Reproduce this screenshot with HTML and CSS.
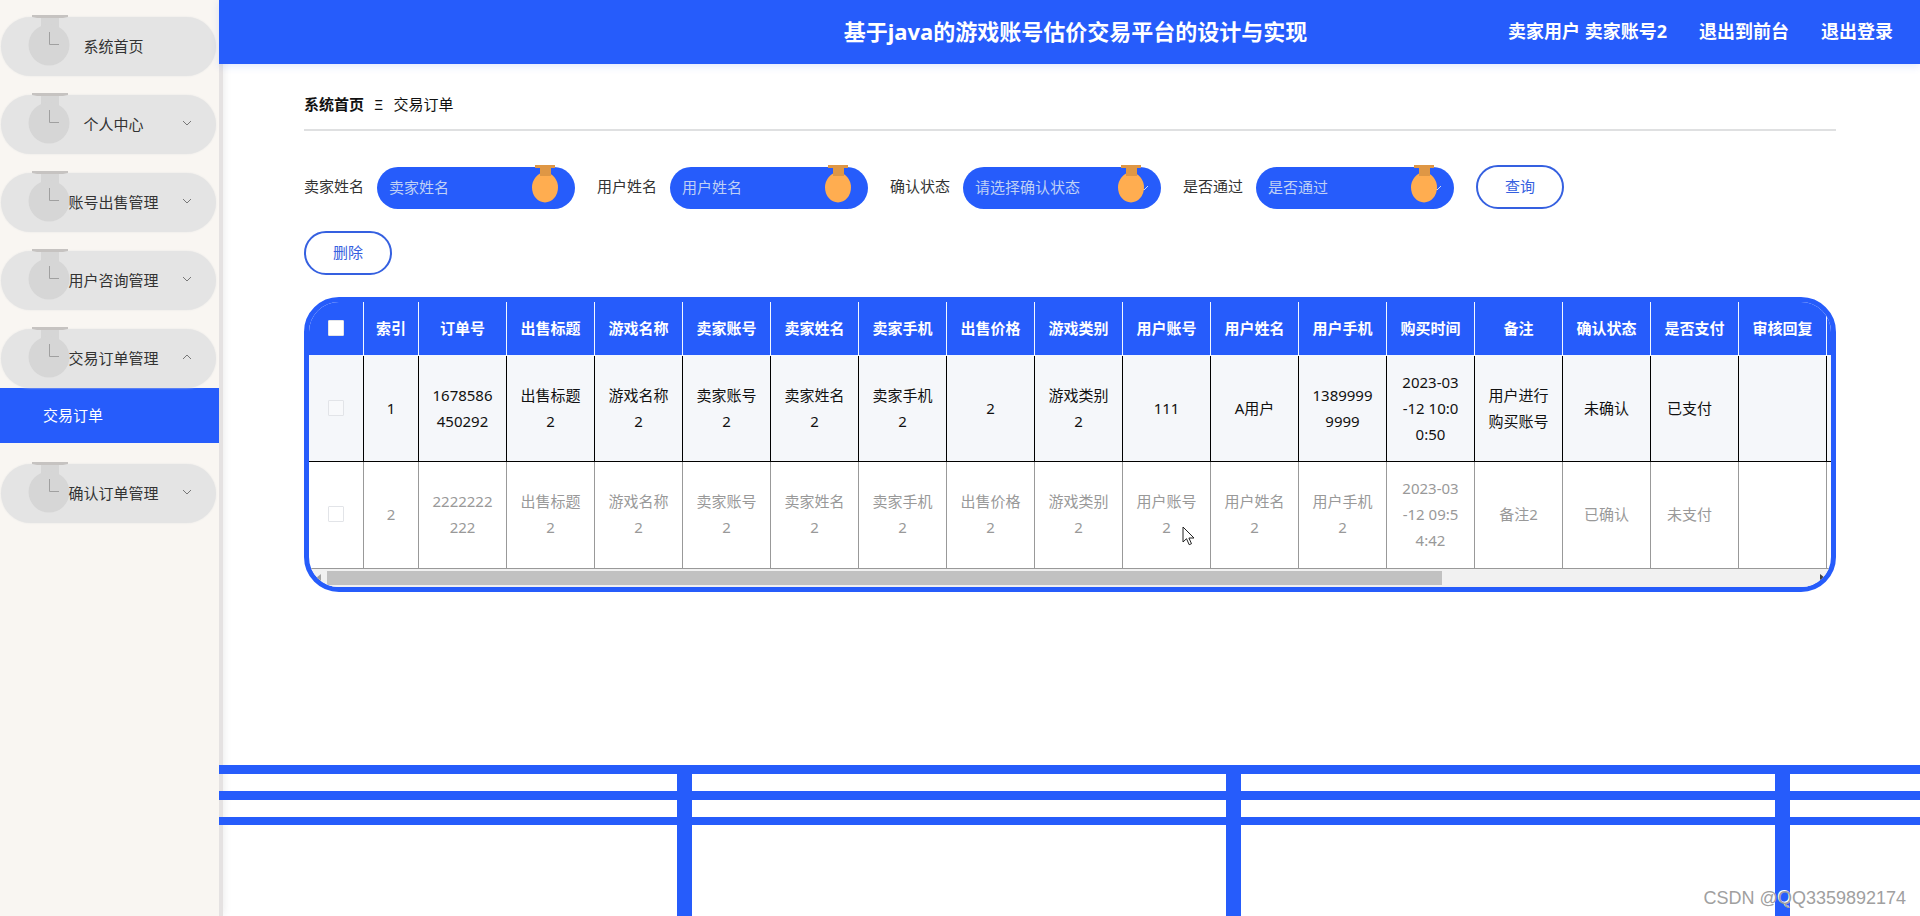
FILE: index.html
```html
<!DOCTYPE html>
<html lang="zh-CN">
<head>
<meta charset="utf-8">
<title>基于java的游戏账号估价交易平台的设计与实现</title>
<link rel="stylesheet" href="styles.css">
</head>
<body>
<svg class="defs" aria-hidden="true">
  <symbol id="clock-medal" viewBox="0 0 44 54">
    <rect x="14" y="3" width="18" height="20" fill="#d6d6d6"/>
    <circle cx="22" cy="31" r="20.500" fill="#d6d6d6"/>
    <path d="M5 1h36v2l-5 1H10L5 3z" fill="#c6c3c1"/>
    <path d="M22.500 18v12.500H32" fill="none" stroke="#a0a0a0"/>
  </symbol>
  <symbol id="medal" viewBox="0 0 26 38">
    <ellipse cx="13" cy="22.500" rx="13" ry="15" fill="#ffad50"/>
    <path d="M3 0h20v3h-4v8H8V3H3z" fill="#df9745"/>
  </symbol>
  <symbol id="chevron" viewBox="0 0 10 6">
    <path d="M1 1l4 4 4-4" fill="none" stroke="currentColor"/>
  </symbol>
</svg>
<div class="app">
  <nav class="sidebar">
    <a class="item" href="#"><svg class="item-icon"><use href="#clock-medal"/></svg><span class="item-text">系统首页</span></a>
    <a class="item" href="#"><svg class="item-icon"><use href="#clock-medal"/></svg><span class="item-text">个人中心</span><svg class="arrow"><use href="#chevron"/></svg></a>
    <a class="item" href="#"><svg class="item-icon"><use href="#clock-medal"/></svg><span class="item-text">账号出售管理</span><svg class="arrow"><use href="#chevron"/></svg></a>
    <a class="item" href="#"><svg class="item-icon"><use href="#clock-medal"/></svg><span class="item-text">用户咨询管理</span><svg class="arrow"><use href="#chevron"/></svg></a>
    <a class="item item-open" href="#"><svg class="item-icon"><use href="#clock-medal"/></svg><span class="item-text">交易订单管理</span><svg class="arrow arrow-up"><use href="#chevron"/></svg></a>
    <a class="subitem" href="#">交易订单</a>
    <a class="item" href="#"><svg class="item-icon"><use href="#clock-medal"/></svg><span class="item-text">确认订单管理</span><svg class="arrow"><use href="#chevron"/></svg></a>
  </nav>
  <div class="page">
    <header class="topbar">
      <h1 class="title">基于java的游戏账号估价交易平台的设计与实现</h1>
      <div class="user-links">
        <span>卖家用户 卖家账号2</span>
        <a href="#">退出到前台</a>
        <a href="#">退出登录</a>
      </div>
    </header>
    <main class="content">
      <div class="breadcrumb"><b>系统首页</b><span>Ξ</span><span>交易订单</span></div>
      <form class="filters">
        <div class="field">
          <label for="seller">卖家姓名</label>
          <div class="control"><input id="seller" type="text" placeholder="卖家姓名"><svg class="medal"><use href="#medal"/></svg></div>
        </div>
        <div class="field">
          <label for="user">用户姓名</label>
          <div class="control"><input id="user" type="text" placeholder="用户姓名"><svg class="medal"><use href="#medal"/></svg></div>
        </div>
        <div class="field">
          <label for="status">确认状态</label>
          <div class="control"><select id="status"><option>请选择确认状态</option></select><svg class="select-arrow"><use href="#chevron"/></svg><svg class="medal"><use href="#medal"/></svg></div>
        </div>
        <div class="field">
          <label for="passed">是否通过</label>
          <div class="control"><select id="passed"><option>是否通过</option></select><svg class="select-arrow"><use href="#chevron"/></svg><svg class="medal"><use href="#medal"/></svg></div>
        </div>
        <button class="btn" type="button">查询</button>
      </form>
      <div class="actions"><button class="btn" type="button">删除</button></div>
      <section class="table-box">
        <table class="orders">
          <colgroup><col class="col-narrow" span="2"><col class="col-data" span="16"><col class="col-ops"></colgroup>
          <thead>
            <tr>
              <th><input class="check" type="checkbox" aria-label="全选"></th>
              <th>索引</th><th>订单号</th><th>出售标题</th><th>游戏名称</th><th>卖家账号</th><th>卖家姓名</th><th>卖家手机</th><th>出售价格</th><th>游戏类别</th><th>用户账号</th><th>用户姓名</th><th>用户手机</th><th>购买时间</th><th>备注</th><th>确认状态</th><th>是否支付</th><th>审核回复</th><th></th>
            </tr>
          </thead>
          <tbody>
            <tr class="row-hover">
              <td><input class="check" type="checkbox" aria-label="1"></td>
              <td>1</td><td>1678586<br>450292</td><td>出售标题2</td><td>游戏名称2</td><td>卖家账号2</td><td>卖家姓名2</td><td>卖家手机2</td><td>2</td><td>游戏类别2</td><td>111</td><td>A用户</td><td>1389999<br>9999</td><td>2023-03<br>-12 10:0<br>0:50</td><td>用户进行购买账号</td><td>未确认</td><td class="pay">已支付</td><td></td><td></td>
            </tr>
            <tr class="row-muted">
              <td><input class="check" type="checkbox" aria-label="2"></td>
              <td>2</td><td>2222222<br>222</td><td>出售标题2</td><td>游戏名称2</td><td>卖家账号2</td><td>卖家姓名2</td><td>卖家手机2</td><td>出售价格2</td><td>游戏类别2</td><td>用户账号2</td><td>用户姓名2</td><td>用户手机2</td><td>2023-03<br>-12 09:5<br>4:42</td><td>备注2</td><td>已确认</td><td class="pay">未支付</td><td></td><td></td>
            </tr>
          </tbody>
        </table>
        <div class="scrollbar">
          <svg class="scroll-arrow" viewBox="0 0 18 18"><path d="M12 5v8L7 9z" fill="#a3a3a3"/></svg>
          <div class="scroll-track"><div class="scroll-thumb"></div></div>
          <svg class="scroll-arrow" viewBox="0 0 18 18"><path d="M7 5v8l5-4z" fill="#404040"/></svg>
        </div>
      </section>
    </main>
    <div class="rails"></div>
  </div>
</div>
<svg class="cursor" viewBox="0 0 13 20"><path d="M1 1v15l3.500-3.300 2.700 6 2.300-1-2.600-5.700H12z" fill="#fff" stroke="#222"/></svg>
<div class="watermark">CSDN @QQ3359892174</div>
</body>
</html>
```

FILE: styles.css
```css
* { box-sizing: border-box; }

body {
  margin: 0;
  position: relative;
  background: #fff;
  color: #333;
  font: 15px/26px "Noto Sans", "Noto Sans CJK SC", sans-serif;
}

a { color: inherit; text-decoration: none; }
input, select, button { font: inherit; }
.defs { display: none; }

.app { display: flex; min-height: 100vh; }

/* Side menu */
.sidebar {
  flex: 0 0 219px;
  padding-top: 17px;
  background: #f9f6f2;
  box-shadow: 4px 0 0 #e5e2e2, 5px 0 8px rgba(0, 0, 0, 0.08);
}

.item {
  position: relative;
  display: flex;
  align-items: center;
  justify-content: center;
  height: 59px;
  margin: 0 3px 19px 1px;
  padding: 0 0 2px 10px;
  border-radius: 30px;
  background: #e4e4e4;
  box-shadow: 0 0 2px #e4e4e4;
}

.item-open { margin-bottom: 0; }
.item-text { position: relative; }
.item-icon { position: absolute; left: 26px; top: -3px; width: 44px; height: 54px; }
.arrow { position: absolute; right: 24px; top: 25px; width: 10px; height: 6px; color: #777; }
.arrow-up { transform: rotate(180deg); }

.subitem {
  display: block;
  height: 55px;
  margin-bottom: 21px;
  padding-left: 43px;
  background: #265cfb;
  color: #fff;
  line-height: 54px;
}

/* Page column */
.page { flex: 1; min-width: 0; display: flex; flex-direction: column; }

.topbar {
  display: grid;
  grid-template-columns: 1fr auto 1fr;
  align-items: center;
  height: 64px;
  padding: 0 27px 2px 39px;
  background: #265cfb;
  box-shadow: 0 2px 8px rgba(38, 92, 251, 0.15);
  color: #fff;
  position: relative;
}

.title { grid-column: 2; margin: 0; font-size: 22px; font-weight: 700; }

.user-links {
  display: flex;
  justify-content: flex-end;
  gap: 32px;
  font-size: 18px;
  font-weight: 700;
  white-space: nowrap;
}

.content { padding: 0 84px 40px 85px; }

.breadcrumb {
  display: flex;
  gap: 10px;
  padding: 27px 0 12px;
  border-bottom: 2px solid #dfe0e1;
  color: #111;
}

.filters { display: flex; flex-wrap: wrap; gap: 22px; margin-top: 34px; }
.field { display: flex; align-items: center; gap: 13px; }
.field label { padding-bottom: 2px; }
.control { position: relative; width: 198px; padding-top: 1px; }

.control input,
.control select {
  display: block;
  width: 100%;
  height: 42px;
  padding: 0 12px 2px;
  border: 0;
  border-radius: 21px;
  background: #265cfb;
  color: #bfd0f5;
  appearance: none;
}

.control input::placeholder { color: #bfd0f5; opacity: 1; }
.medal { position: absolute; right: 17px; top: -1px; width: 26px; height: 38px; }
.select-arrow { position: absolute; right: 12px; top: 19px; width: 10px; height: 6px; color: #d0dcf5; }

.btn {
  width: 88px;
  height: 44px;
  padding: 0 0 2px;
  border: 2px solid #3560e0;
  border-radius: 22px;
  background: #fff;
  color: #3560e0;
}

.actions { display: flex; margin: 22px 0; }

/* Orders table */
.table-box { overflow: hidden; border: 5px solid #265cfb; border-radius: 35px; background: #fff; }

.orders {
  width: 2028px;
  table-layout: fixed;
  border-collapse: separate;
  border-spacing: 0;
  color: #111;
  text-align: center;
}

.col-narrow { width: 55px; }
.col-data { width: 88px; }

.orders th,
.orders td {
  padding: 0 12px 2px;
  border-right: 1px solid #000;
  border-bottom: 1px solid #000;
  word-break: break-all;
}

.orders th { height: 54px; padding: 0 8px 2px; border-color: #f2f6ff; background: #265cfb; color: #fff; font-weight: 700; }
.orders td { height: 106px; }
.orders .pay { padding-right: 22px; }
.row-hover td { background: #f5f7fa; }
.row-muted td { border-color: #999; color: #999; }
.row-muted td { height: 107px; }

.check {
  display: block;
  width: 16px;
  height: 16px;
  margin: 0 auto;
  border: 1px solid #e2e4e8;
  border-radius: 1px;
  background: #fff;
  appearance: none;
}

.row-hover .check { background: #f8f9fb; }
.scrollbar { display: flex; height: 18px; background: #f1f1f1; }
.scroll-arrow { flex: 0 0 18px; height: 18px; }
.scroll-track { flex: 1; padding: 2px 0; }
.scroll-thumb { width: 75%; height: 14px; background: #c1c1c1; }

/* Decorative rails at the bottom of the page */
.rails {
  position: relative;
  height: 151px;
  margin-top: auto;
  background:
    linear-gradient(#265cfb 0 9px, transparent 9px 26px, #265cfb 26px 35px, transparent 35px 52px, #265cfb 52px 60px, transparent 60px),
    linear-gradient(90deg, #265cfb 15px, transparent 15px) 458px 0 / 549px 100%;
}

.cursor { position: absolute; left: 1182px; top: 526px; width: 13px; height: 20px; }

.watermark {
  position: absolute;
  right: 14px;
  bottom: 5px;
  color: #a0a0a0;
  font-family: "Liberation Sans", sans-serif;
  font-size: 18px;
  text-shadow: -1px -1px 0 #fff;
}
```
